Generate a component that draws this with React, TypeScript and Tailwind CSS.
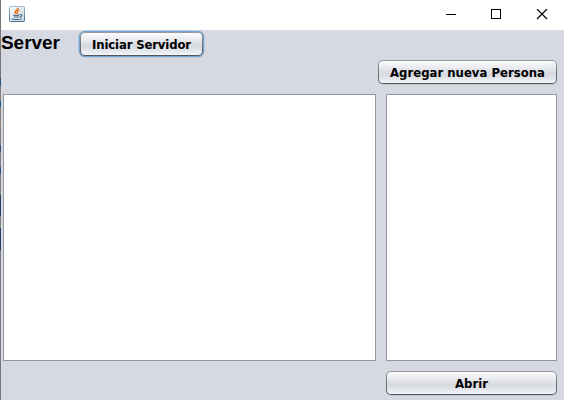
import type { ReactNode } from "react";

function NimbusButton({
  children,
  className = "",
  labelClass = "",
  focused = false,
}: {
  children: ReactNode;
  className?: string;
  labelClass?: string;
  focused?: boolean;
}) {
  return (
    <button
      className={`h-6 shrink-0 rounded-[5px] bg-linear-to-b from-[#989ba2] to-[#50545b] p-px ${
        focused ? "shadow-[0_0_0_1.3px_#73a4d1]" : "shadow-[0_1px_0_#c6c9d2]"
      } ${className}`}
    >
      <span className="flex h-full w-full items-center justify-center rounded-[4px] bg-[linear-gradient(#fbfbfc_0%,#e9ebee_30%,#d6d9df_58%,#dfe2e7_75%,#f4f6f9_100%)] font-['DejaVu_Sans_Condensed','DejaVu_Sans',sans-serif] text-[13px] leading-none font-bold whitespace-nowrap text-black">
        <span className={labelClass}>{children}</span>
      </span>
    </button>
  );
}

function JavaIcon() {
  return (
    <svg width="16" height="16" viewBox="0 0 16 16" fill="none">
      <defs>
        <linearGradient id="frame" x1="0" y1="0" x2="0" y2="1">
          <stop offset="0" stopColor="#a4b8c7" />
          <stop offset="1" stopColor="#496c8b" />
        </linearGradient>
        <linearGradient id="face" x1="0" y1="0" x2="1" y2="1">
          <stop offset="0" stopColor="#fff" />
          <stop offset="1" stopColor="#c5d2dc" />
        </linearGradient>
      </defs>
      <rect x=".5" y=".5" width="15" height="15" rx=".8" fill="url(#face)" stroke="url(#frame)" />
      <path d="M9.2 1.8C9.4 3.8 5.8 4.4 6 6.2c.1.8.9 1.2 1.1 2M10.3 4.2C8.2 5 7.9 5.8 8.4 6.6c.3.6.1 1-.3 1.6" stroke="#e8701c" strokeWidth="1.4" />
      <path d="M4 8.9c1.7.6 4.4.6 6.2 0M5 10.8c1.4.5 3.4.5 4.8 0M10.7 8.6c3-.7 2.5 2 .2 2.5M3 12.5c-.6 1.4 8.2 1.4 9.4 0" stroke="#42698b" strokeWidth="1.1" />
    </svg>
  );
}

function TitleBar() {
  return (
    <header className="flex h-[30px] items-start bg-white">
      <div className="pt-[6px] pl-[8px]">
        <JavaIcon />
      </div>
      <div className="ml-auto flex pt-[9px] pr-[16px]">
        <svg width="102" height="11" viewBox="0 0 102 11" fill="none" stroke="#000" shapeRendering="crispEdges">
          <path d="M0 5.5h10M45.5.5h9v9h-9z" />
          <path d="M91 0 101 10M101 0 91 10" strokeWidth="1.2" shapeRendering="auto" />
        </svg>
      </div>
    </header>
  );
}

export default function App() {
  return (
    <div className="flex h-[400px] w-[564px] overflow-hidden bg-[#d6d9e1]">
      <div className="h-full w-px shrink-0 bg-[linear-gradient(#777_0_78px,#28577e_78px_86px,#857d7b_86px_101px,#28577e_101px_107px,#857d7b_107px_122px,#ac8957_122px_124px,#857d7b_124px_145px,#34506b_145px_152px,#857d7b_152px_167px,#28577e_167px_174px,#857d7b_174px_195px,#253d65_195px_216px,#857d7b_216px_228px,#253d65_228px_250px,#777_250px)]" />
      <main className="flex min-w-0 flex-1 flex-col">
        <TitleBar />
        <div className="flex h-[30px] shrink-0 items-start">
          <h1 className="w-[79px] pt-[2px] font-['Liberation_Sans',Arial,sans-serif] text-[19px] leading-[22px] font-bold tracking-[-0.05px] text-black">
            Server
          </h1>
          <NimbusButton focused className="mt-[2px] w-[123px]" labelClass="tracking-[-0.15px]">
            Iniciar Servidor
          </NimbusButton>
        </div>
        <div className="flex h-[34px] shrink-0 items-start justify-end pr-[7px]">
          <NimbusButton className="w-[179px]">Agregar nueva Persona</NimbusButton>
        </div>
        <div className="flex h-[267px] shrink-0 gap-[10px] pr-[7px] pl-[2px]">
          <div className="w-[373px] border border-[#9297a1] bg-white" />
          <div className="w-[171px] border border-[#9297a1] bg-white" />
        </div>
        <div className="flex justify-end pt-[10px] pr-[7px]">
          <NimbusButton className="w-[171px]">Abrir</NimbusButton>
        </div>
      </main>
    </div>
  );
}
